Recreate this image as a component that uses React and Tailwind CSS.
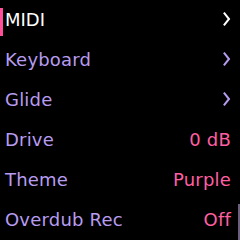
const items = [
  { label: 'MIDI', kind: 'sub', active: true },
  { label: 'Keyboard', kind: 'sub' },
  { label: 'Glide', kind: 'sub' },
  { label: 'Drive', value: '0 dB' },
  { label: 'Theme', value: 'Purple' },
  { label: 'Overdub Rec', value: 'Off' },
];

const Chevron = ({ className }) => (
  <svg className={className} width="8" height="14" viewBox="0 0 8 14" fill="none">
    <path d="M1.5 1.5 L6 7 L1.5 12.5" stroke="currentColor" strokeWidth="2" strokeLinecap="square" />
  </svg>
);

export default function App() {
  return (
    <div
      className="relative w-[240px] h-[240px] bg-black overflow-hidden"
      style={{ fontFamily: '"DejaVu Sans", sans-serif' }}
    >
      {items.map((item) => (
        <div key={item.label} className="flex items-center h-10 pr-[9px] pb-[2px] text-[18px] tracking-[0.2px]">
          {item.active ? (
            <>
              <div className="w-[3px] h-7 mt-[6px] bg-[#ff4f9a]" />
              <span className="ml-[2px] text-white tracking-normal">{item.label}</span>
            </>
          ) : (
            <span className="pl-[5px] text-[#b79cf0]">{item.label}</span>
          )}
          <div className="flex-1" />
          {item.kind === 'sub' ? (
            <Chevron className={item.active ? 'text-white' : 'text-[#b79cf0]'} />
          ) : (
            <span className="text-[#ff5fa0]">{item.value}</span>
          )}
        </div>
      ))}
      {/* scrollbar */}
      <div className="absolute right-0 top-[204px] w-[2px] h-[36px] bg-[#6b5f7d]" />
    </div>
  );
}
